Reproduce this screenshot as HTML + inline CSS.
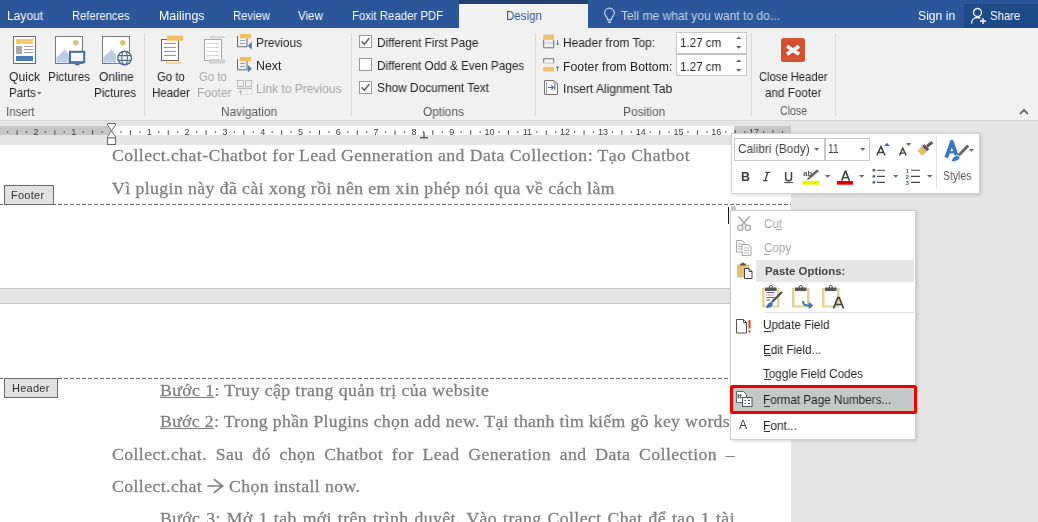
<!DOCTYPE html>
<html><head><meta charset="utf-8"><style>
html,body{-webkit-font-smoothing:antialiased;margin:0;padding:0;width:1038px;height:522px;overflow:hidden;background:#e6e6e6;}
.r{position:absolute;box-sizing:border-box;}
.t{position:absolute;line-height:0;white-space:pre;will-change:transform;}
svg.r{overflow:visible;will-change:transform;}
</style></head><body>
<div class="r" style="left:0px;top:0px;width:1038px;height:28px;background:#2b579a;"></div>
<div class="t" style="left:7.4px;top:16.07px;font-size:12.2px;color:#ffffff;font-family:'Liberation Sans', sans-serif;transform:scaleX(0.9861);transform-origin:0 0;">Layout</div>
<div class="t" style="left:72.4px;top:16.07px;font-size:12.2px;color:#ffffff;font-family:'Liberation Sans', sans-serif;transform:scaleX(0.9230);transform-origin:0 0;">References</div>
<div class="t" style="left:158.6px;top:16.07px;font-size:12.2px;color:#ffffff;font-family:'Liberation Sans', sans-serif;transform:scaleX(1.0186);transform-origin:0 0;">Mailings</div>
<div class="t" style="left:232.6px;top:16.07px;font-size:12.2px;color:#ffffff;font-family:'Liberation Sans', sans-serif;transform:scaleX(0.9256);transform-origin:0 0;">Review</div>
<div class="t" style="left:298px;top:16.07px;font-size:12.2px;color:#ffffff;font-family:'Liberation Sans', sans-serif;transform:scaleX(0.9462);transform-origin:0 0;">View</div>
<div class="t" style="left:352px;top:16.07px;font-size:12.2px;color:#ffffff;font-family:'Liberation Sans', sans-serif;transform:scaleX(0.9344);transform-origin:0 0;">Foxit Reader PDF</div>
<div class="r" style="left:458.7px;top:0px;width:129.6px;height:4px;background:#213f70;"></div>
<div class="r" style="left:458.7px;top:4px;width:129.6px;height:24px;background:#f1f1f1;"></div>
<div class="t" style="left:505.5px;top:15.87px;font-size:12.2px;color:#2b579a;font-family:'Liberation Sans', sans-serif;transform:scaleX(0.9459);transform-origin:0 0;">Design</div>
<svg class="r" style="left:603px;top:7px;" width="13" height="16" viewBox="0 0 13 16"><path d="M6.5 1.2C3.6 1.2 1.6 3.3 1.6 5.9c0 1.8 1 3 1.9 4 .6.7.9 1.3.9 2v.6h4.2v-.6c0-.7.3-1.3.9-2 .9-1 1.9-2.2 1.9-4 0-2.6-2-4.7-4.9-4.7z" fill="none" stroke="#c9d6ea" stroke-width="1.2"/><path d="M4.5 14h4M5 15.5h3" stroke="#c9d6ea" stroke-width="1"/></svg>
<div class="t" style="left:620.8px;top:16.07px;font-size:12.2px;color:#c9d6ea;font-family:'Liberation Sans', sans-serif;transform:scaleX(0.9900);transform-origin:0 0;">Tell me what you want to do...</div>
<div class="t" style="left:917.7px;top:16.07px;font-size:12.2px;color:#ffffff;font-family:'Liberation Sans', sans-serif;transform:scaleX(0.9944);transform-origin:0 0;">Sign in</div>
<div class="r" style="left:964px;top:4px;width:74px;height:24px;background:#1e4a88;"></div>
<svg class="r" style="left:970px;top:7px;" width="18" height="18" viewBox="0 0 18 18"><circle cx="7.5" cy="5.5" r="4" fill="none" stroke="#fff" stroke-width="1.3"/><path d="M1.5 16.5c0-3.5 2.5-6 6-6 1.2 0 2.2.3 3 .8" fill="none" stroke="#fff" stroke-width="1.3"/><path d="M13 11v6M10 14h6" stroke="#fff" stroke-width="1.3"/></svg>
<div class="t" style="left:990px;top:16.07px;font-size:12.2px;color:#ffffff;font-family:'Liberation Sans', sans-serif;transform:scaleX(0.9290);transform-origin:0 0;">Share</div>
<div class="r" style="left:0px;top:28px;width:1038px;height:92px;background:#f1f1f1;"></div>
<div class="r" style="left:0px;top:120px;width:1038px;height:1px;background:#d6d6d6;"></div>
<div class="r" style="left:144px;top:33px;width:1px;height:83px;background:#d9d9d9;"></div>
<div class="r" style="left:351px;top:33px;width:1px;height:83px;background:#d9d9d9;"></div>
<div class="r" style="left:535px;top:33px;width:1px;height:83px;background:#d9d9d9;"></div>
<div class="r" style="left:751px;top:33px;width:1px;height:83px;background:#d9d9d9;"></div>
<div class="r" style="left:835px;top:33px;width:1px;height:83px;background:#d9d9d9;"></div>
<svg class="r" style="left:13px;top:36px;" width="23" height="28" viewBox="0 0 23 28"><rect x="0.5" y="0.5" width="22" height="27" fill="#fff" stroke="#6d6d6d"/><rect x="3" y="3" width="17" height="5" fill="#f0c86e"/><rect x="3" y="10" width="6" height="8" fill="#a9a9a9"/><path d="M11 10.5h9M11 13.5h9M11 16.5h9" stroke="#9a9a9a"/><rect x="3" y="20" width="17" height="5" fill="#4a7ebb"/></svg>
<svg class="r" style="left:55px;top:36px;" width="32" height="32" viewBox="0 0 32 32"><rect x="0.5" y="0.5" width="27" height="27" fill="#fff" stroke="#7a7a7a"/><circle cx="20.8" cy="6.8" r="2.7" fill="#e9b876"/><path d="M1.5 26.5V21.5L9.5 13.5 14 18V26.5z" fill="#bccde6"/><rect x="15" y="15.8" width="14.2" height="10.4" fill="#f4f9ff" stroke="#4d6a96" stroke-width="2"/><path d="M20 28.6h4.5" stroke="#4d6a96" stroke-width="1.2"/></svg>
<svg class="r" style="left:102px;top:36px;" width="32" height="32" viewBox="0 0 32 32"><rect x="0.5" y="0.5" width="27" height="27" fill="#fff" stroke="#7a7a7a"/><circle cx="20.8" cy="6.8" r="2.7" fill="#e0c26c"/><path d="M1.5 26.5V21.5L9.5 13.5 14 18V26.5z" fill="#bccde6"/><circle cx="22.6" cy="22" r="6.8" fill="#fff" stroke="#4d6a96" stroke-width="1.4"/><ellipse cx="22.6" cy="22" rx="2.8" ry="6.8" fill="none" stroke="#4d6a96" stroke-width="1.1"/><path d="M15.8 19.6h13.6M15.8 24.4h13.6" stroke="#4d6a96" stroke-width="1.1"/></svg>
<div class="t" style="left:-4.2px;top:77.07px;font-size:12.2px;color:#262626;font-family:'Liberation Sans', sans-serif;transform:scaleX(0.9590);transform-origin:0 0;">t</div>
<div class="t" style="left:9px;top:77.07px;font-size:12.2px;color:#262626;font-family:'Liberation Sans', sans-serif;transform:scaleX(1.0000);transform-origin:0 0;">Quick</div>
<div class="t" style="left:8.6px;top:92.87px;font-size:12.2px;color:#262626;font-family:'Liberation Sans', sans-serif;transform:scaleX(0.9444);transform-origin:0 0;">Parts</div>
<svg class="r" style="left:37.4px;top:91.8px;" width="6" height="4" viewBox="0 0 6 4"><path d="M0 0h4.6l-2.3 2.4z" fill="#666"/></svg>
<div class="t" style="left:48.3px;top:77.07px;font-size:12.2px;color:#262626;font-family:'Liberation Sans', sans-serif;transform:scaleX(0.9535);transform-origin:0 0;">Pictures</div>
<div class="t" style="left:99px;top:77.07px;font-size:12.2px;color:#262626;font-family:'Liberation Sans', sans-serif;transform:scaleX(0.9829);transform-origin:0 0;">Online</div>
<div class="t" style="left:94px;top:92.87px;font-size:12.2px;color:#262626;font-family:'Liberation Sans', sans-serif;transform:scaleX(0.9535);transform-origin:0 0;">Pictures</div>
<div class="t" style="left:6.3px;top:111.57px;font-size:12.2px;color:#595959;font-family:'Liberation Sans', sans-serif;transform:scaleX(0.9400);transform-origin:0 0;">Insert</div>
<svg class="r" style="left:160px;top:35px;" width="26" height="30" viewBox="0 0 26 30"><rect x="1.5" y="4.5" width="17" height="21" fill="#fff" stroke="#666" stroke-width="1"/><path d="M4 8.4h12M4 12.4h12M4 16.4h12M4 20.4h12" stroke="#8c8ca0"/><rect x="6.8" y="0.7" width="16.4" height="5" fill="#f0c060"/><rect x="6" y="27.2" width="15.5" height="1.6" fill="#f3cf86"/></svg>
<svg class="r" style="left:203px;top:35px;" width="26" height="30" viewBox="0 0 26 30"><rect x="7" y="1" width="14.5" height="2" fill="#d6d6d6"/><rect x="1.5" y="4.5" width="17" height="21" fill="#fff" stroke="#a8a8a8" stroke-width="1.1"/><path d="M4 8.4h12M4 12.4h12M4 16.4h12M4 20.4h12" stroke="#cfcfcf"/><rect x="6" y="24" width="16" height="4.6" fill="#d3d3d3"/></svg>
<div class="t" style="left:156.6px;top:76.77px;font-size:12.2px;color:#262626;font-family:'Liberation Sans', sans-serif;transform:scaleX(0.9300);transform-origin:0 0;">Go to</div>
<div class="t" style="left:151.7px;top:92.97px;font-size:12.2px;color:#262626;font-family:'Liberation Sans', sans-serif;transform:scaleX(0.9462);transform-origin:0 0;">Header</div>
<div class="t" style="left:198.7px;top:76.77px;font-size:12.2px;color:#a6a6a6;font-family:'Liberation Sans', sans-serif;transform:scaleX(0.9300);transform-origin:0 0;">Go to</div>
<div class="t" style="left:196.7px;top:92.97px;font-size:12.2px;color:#a6a6a6;font-family:'Liberation Sans', sans-serif;transform:scaleX(0.9794);transform-origin:0 0;">Footer</div>
<svg class="r" style="left:237px;top:34px;" width="16" height="17" viewBox="0 0 16 17"><path d="M0.5 2v10.8h9.5V4" fill="none" stroke="#6a6a6a"/><path d="M3 6.5h5M3 9.5h5" stroke="#8fa3c4"/><rect x="2.8" y="0" width="11.2" height="4.3" fill="#f0c060"/><path d="M10.8 11.8L14.8 7.8v7.6z" fill="#4a7ebb"/></svg>
<svg class="r" style="left:237px;top:57px;" width="16" height="17" viewBox="0 0 16 17"><path d="M0.5 2v10.8h9.5V4" fill="none" stroke="#6a6a6a"/><path d="M3 6.5h5M3 9.5h5" stroke="#8fa3c4"/><rect x="2.8" y="0" width="11.2" height="4.3" fill="#f0c060"/><path d="M14.8 11.8L10.8 7.8v7.6z" fill="#4a7ebb"/></svg>
<svg class="r" style="left:237px;top:80px;" width="16" height="16" viewBox="0 0 16 16"><rect x="0.5" y="0.5" width="6" height="6" fill="none" stroke="#bdbdbd"/><rect x="8.5" y="0.5" width="6" height="6" fill="none" stroke="#bdbdbd"/><path d="M0 8.5h15" stroke="#bdbdbd" stroke-width="1.5"/><path d="M3.5 15V10.5M1.5 12.5l2-2 2 2" fill="none" stroke="#b5b5b5"/><path d="M6 14.5h9M14.5 10v5" stroke="#c8c8c8" stroke-dasharray="1 1.2"/></svg>
<div class="t" style="left:256.4px;top:42.97px;font-size:12.2px;color:#262626;font-family:'Liberation Sans', sans-serif;transform:scaleX(0.9696);transform-origin:0 0;">Previous</div>
<div class="t" style="left:256.4px;top:65.97px;font-size:12.2px;color:#262626;font-family:'Liberation Sans', sans-serif;transform:scaleX(1.0125);transform-origin:0 0;">Next</div>
<div class="t" style="left:256.4px;top:88.87px;font-size:12.2px;color:#a6a6a6;font-family:'Liberation Sans', sans-serif;transform:scaleX(0.9882);transform-origin:0 0;">Link to Previous</div>
<div class="t" style="left:220.6px;top:111.77px;font-size:12.2px;color:#595959;font-family:'Liberation Sans', sans-serif;transform:scaleX(0.9750);transform-origin:0 0;">Navigation</div>
<svg class="r" style="left:359px;top:35px;" width="13" height="13" viewBox="0 0 13 13"><rect x="0.5" y="0.5" width="12" height="12" fill="#fff" stroke="#999"/><path d="M2.6 6.4l2.8 2.9 5-6.2" fill="none" stroke="#666" stroke-width="1.6"/></svg>
<svg class="r" style="left:359px;top:58px;" width="13" height="13" viewBox="0 0 13 13"><rect x="0.5" y="0.5" width="12" height="12" fill="#fff" stroke="#999"/></svg>
<svg class="r" style="left:359px;top:81px;" width="13" height="13" viewBox="0 0 13 13"><rect x="0.5" y="0.5" width="12" height="12" fill="#fff" stroke="#999"/><path d="M2.6 6.4l2.8 2.9 5-6.2" fill="none" stroke="#666" stroke-width="1.6"/></svg>
<div class="t" style="left:377.4px;top:42.67px;font-size:12.2px;color:#262626;font-family:'Liberation Sans', sans-serif;transform:scaleX(0.9670);transform-origin:0 0;">Different First Page</div>
<div class="t" style="left:377.4px;top:65.77px;font-size:12.2px;color:#262626;font-family:'Liberation Sans', sans-serif;transform:scaleX(0.9632);transform-origin:0 0;">Different Odd &amp; Even Pages</div>
<div class="t" style="left:377.4px;top:88.47px;font-size:12.2px;color:#262626;font-family:'Liberation Sans', sans-serif;transform:scaleX(0.9746);transform-origin:0 0;">Show Document Text</div>
<div class="t" style="left:422.6px;top:111.67px;font-size:12.2px;color:#595959;font-family:'Liberation Sans', sans-serif;transform:scaleX(0.9738);transform-origin:0 0;">Options</div>
<svg class="r" style="left:542px;top:34px;" width="18" height="15" viewBox="0 0 18 15"><rect x="1.2" y="0.6" width="10.7" height="5.2" fill="#f0c070"/><path d="M1.5 9h10.5" stroke="#a0a0a0" stroke-dasharray="1 1"/><path d="M1.7 5.8v8h10v-8" fill="none" stroke="#707070" stroke-width="1"/><path d="M15.5 6.2v4.8M14 9.4l1.5 1.6 1.5-1.6" fill="none" stroke="#4d6a96" stroke-width="0.9"/></svg>
<svg class="r" style="left:542px;top:58px;" width="18" height="15" viewBox="0 0 18 15"><path d="M1.7 4.5V0.7h10v3.8" fill="none" stroke="#707070" stroke-width="1"/><path d="M1.5 5.2h10.5" stroke="#a0a0a0" stroke-dasharray="1 1"/><rect x="1.2" y="8.8" width="10.7" height="4.8" fill="#f0c070"/><path d="M15.5 13.2v-4.8M14 10l1.5-1.6 1.5 1.6" fill="none" stroke="#4d6a96" stroke-width="0.9"/></svg>
<svg class="r" style="left:543px;top:80px;" width="16" height="16" viewBox="0 0 16 16"><path d="M1.5 0.5h9.5l3.5 3.5v10.5H1.5z" fill="#fff" stroke="#707070"/><path d="M3.5 2v12" stroke="#a0a0a0"/><path d="M11 0.5v3.5h3.5" fill="none" stroke="#909090"/><path d="M5 7.5h5.5M8.3 5.3l2.2 2.2-2.2 2.2M11.8 4.8v5.4" fill="none" stroke="#4d6a96" stroke-width="1.1"/></svg>
<div class="t" style="left:562.8px;top:43.27px;font-size:12.2px;color:#262626;font-family:'Liberation Sans', sans-serif;transform:scaleX(0.9804);transform-origin:0 0;">Header from Top:</div>
<div class="t" style="left:562.8px;top:66.57px;font-size:12.2px;color:#262626;font-family:'Liberation Sans', sans-serif;transform:scaleX(1.0093);transform-origin:0 0;">Footer from Bottom:</div>
<div class="t" style="left:562.8px;top:88.67px;font-size:12.2px;color:#262626;font-family:'Liberation Sans', sans-serif;transform:scaleX(0.9908);transform-origin:0 0;">Insert Alignment Tab</div>
<div class="t" style="left:622.7px;top:111.57px;font-size:12.2px;color:#595959;font-family:'Liberation Sans', sans-serif;transform:scaleX(0.9762);transform-origin:0 0;">Position</div>
<div class="r" style="left:676px;top:31.5px;width:70.8px;height:22.5px;background:#fff;border:1px solid #c9c9c9;"></div>
<div class="r" style="left:676px;top:53px;width:70.8px;height:23.3px;background:#fff;border:1px solid #c9c9c9;border-top:2px solid #c2c2c2;"></div>
<div class="t" style="left:679.7px;top:43.27px;font-size:12.2px;color:#262626;font-family:'Liberation Sans', sans-serif;transform:scaleX(0.9500);transform-origin:0 0;">1.27 cm</div>
<div class="t" style="left:679.7px;top:66.57px;font-size:12.2px;color:#262626;font-family:'Liberation Sans', sans-serif;transform:scaleX(0.9500);transform-origin:0 0;">1.27 cm</div>
<svg class="r" style="left:735.6px;top:36px;" width="6" height="13" viewBox="0 0 6 13"><path d="M0 3.1L2.75 0.4 5.5 3.1zM0 10H5.5L2.75 12.7z" fill="#666"/></svg>
<svg class="r" style="left:735.6px;top:58.8px;" width="6" height="13" viewBox="0 0 6 13"><path d="M0 3.1L2.75 0.4 5.5 3.1zM0 10H5.5L2.75 12.7z" fill="#666"/></svg>
<svg class="r" style="left:781px;top:38px;" width="24" height="24" viewBox="0 0 24 24"><rect x="0" y="0" width="24" height="24" rx="2.5" fill="#d5502f"/><path d="M6 8.2l12 8.1M18 8.2l-12 8.1" stroke="#fff" stroke-width="3.6"/></svg>
<div class="t" style="left:758.6px;top:76.67px;font-size:12.2px;color:#262626;font-family:'Liberation Sans', sans-serif;transform:scaleX(0.9200);transform-origin:0 0;">Close Header</div>
<div class="t" style="left:765.3px;top:92.77px;font-size:12.2px;color:#262626;font-family:'Liberation Sans', sans-serif;transform:scaleX(0.9576);transform-origin:0 0;">and Footer</div>
<div class="t" style="left:779.7px;top:111.47px;font-size:12.2px;color:#595959;font-family:'Liberation Sans', sans-serif;transform:scaleX(0.8645);transform-origin:0 0;">Close</div>
<svg class="r" style="left:1019px;top:109px;" width="10" height="6" viewBox="0 0 10 6"><path d="M1 5l4-4 4 4" fill="none" stroke="#555" stroke-width="1.6"/></svg>
<div class="r" style="left:0px;top:121px;width:1038px;height:24px;background:#e6e6e6;"></div>
<div class="r" style="left:0px;top:126px;width:111.5px;height:9.3px;background:#c6c6c6;"></div>
<div class="r" style="left:111.5px;top:126px;width:622px;height:9.3px;background:#ffffff;"></div>
<div class="r" style="left:733.5px;top:126px;width:57px;height:9.3px;background:#c6c6c6;"></div>
<svg class="r" style="left:0;top:0" width="1038" height="150" viewBox="0 0 1038 150"><text x="-1.90" y="134.8" font-size="9" text-anchor="middle" fill="#3a3a3a" font-family="Liberation Sans">3</text><rect x="6.95" y="131.3" width="1.3" height="1.5" fill="#555"/><rect x="16.50" y="130.2" width="1.1" height="4.6" fill="#555"/><rect x="25.85" y="131.3" width="1.3" height="1.5" fill="#555"/><text x="35.90" y="134.8" font-size="9" text-anchor="middle" fill="#3a3a3a" font-family="Liberation Sans">2</text><rect x="44.75" y="131.3" width="1.3" height="1.5" fill="#555"/><rect x="54.30" y="130.2" width="1.1" height="4.6" fill="#555"/><rect x="63.65" y="131.3" width="1.3" height="1.5" fill="#555"/><text x="73.70" y="134.8" font-size="9" text-anchor="middle" fill="#3a3a3a" font-family="Liberation Sans">1</text><rect x="82.55" y="131.3" width="1.3" height="1.5" fill="#555"/><rect x="92.10" y="130.2" width="1.1" height="4.6" fill="#555"/><rect x="101.45" y="131.3" width="1.3" height="1.5" fill="#555"/><rect x="120.35" y="131.3" width="1.3" height="1.5" fill="#555"/><rect x="129.90" y="130.2" width="1.1" height="4.6" fill="#555"/><rect x="139.25" y="131.3" width="1.3" height="1.5" fill="#555"/><text x="149.30" y="134.8" font-size="9" text-anchor="middle" fill="#3a3a3a" font-family="Liberation Sans">1</text><rect x="158.15" y="131.3" width="1.3" height="1.5" fill="#555"/><rect x="167.70" y="130.2" width="1.1" height="4.6" fill="#555"/><rect x="177.05" y="131.3" width="1.3" height="1.5" fill="#555"/><text x="187.10" y="134.8" font-size="9" text-anchor="middle" fill="#3a3a3a" font-family="Liberation Sans">2</text><rect x="195.95" y="131.3" width="1.3" height="1.5" fill="#555"/><rect x="205.50" y="130.2" width="1.1" height="4.6" fill="#555"/><rect x="214.85" y="131.3" width="1.3" height="1.5" fill="#555"/><text x="224.90" y="134.8" font-size="9" text-anchor="middle" fill="#3a3a3a" font-family="Liberation Sans">3</text><rect x="233.75" y="131.3" width="1.3" height="1.5" fill="#555"/><rect x="243.30" y="130.2" width="1.1" height="4.6" fill="#555"/><rect x="252.65" y="131.3" width="1.3" height="1.5" fill="#555"/><text x="262.70" y="134.8" font-size="9" text-anchor="middle" fill="#3a3a3a" font-family="Liberation Sans">4</text><rect x="271.55" y="131.3" width="1.3" height="1.5" fill="#555"/><rect x="281.10" y="130.2" width="1.1" height="4.6" fill="#555"/><rect x="290.45" y="131.3" width="1.3" height="1.5" fill="#555"/><text x="300.50" y="134.8" font-size="9" text-anchor="middle" fill="#3a3a3a" font-family="Liberation Sans">5</text><rect x="309.35" y="131.3" width="1.3" height="1.5" fill="#555"/><rect x="318.90" y="130.2" width="1.1" height="4.6" fill="#555"/><rect x="328.25" y="131.3" width="1.3" height="1.5" fill="#555"/><text x="338.30" y="134.8" font-size="9" text-anchor="middle" fill="#3a3a3a" font-family="Liberation Sans">6</text><rect x="347.15" y="131.3" width="1.3" height="1.5" fill="#555"/><rect x="356.70" y="130.2" width="1.1" height="4.6" fill="#555"/><rect x="366.05" y="131.3" width="1.3" height="1.5" fill="#555"/><text x="376.10" y="134.8" font-size="9" text-anchor="middle" fill="#3a3a3a" font-family="Liberation Sans">7</text><rect x="384.95" y="131.3" width="1.3" height="1.5" fill="#555"/><rect x="394.50" y="130.2" width="1.1" height="4.6" fill="#555"/><rect x="403.85" y="131.3" width="1.3" height="1.5" fill="#555"/><text x="413.90" y="134.8" font-size="9" text-anchor="middle" fill="#3a3a3a" font-family="Liberation Sans">8</text><rect x="422.75" y="131.3" width="1.3" height="1.5" fill="#555"/><rect x="432.30" y="130.2" width="1.1" height="4.6" fill="#555"/><rect x="441.65" y="131.3" width="1.3" height="1.5" fill="#555"/><text x="451.70" y="134.8" font-size="9" text-anchor="middle" fill="#3a3a3a" font-family="Liberation Sans">9</text><rect x="460.55" y="131.3" width="1.3" height="1.5" fill="#555"/><rect x="470.10" y="130.2" width="1.1" height="4.6" fill="#555"/><rect x="479.45" y="131.3" width="1.3" height="1.5" fill="#555"/><text x="489.50" y="134.8" font-size="9" text-anchor="middle" fill="#3a3a3a" font-family="Liberation Sans">10</text><rect x="498.35" y="131.3" width="1.3" height="1.5" fill="#555"/><rect x="507.90" y="130.2" width="1.1" height="4.6" fill="#555"/><rect x="517.25" y="131.3" width="1.3" height="1.5" fill="#555"/><text x="527.30" y="134.8" font-size="9" text-anchor="middle" fill="#3a3a3a" font-family="Liberation Sans">11</text><rect x="536.15" y="131.3" width="1.3" height="1.5" fill="#555"/><rect x="545.70" y="130.2" width="1.1" height="4.6" fill="#555"/><rect x="555.05" y="131.3" width="1.3" height="1.5" fill="#555"/><text x="565.10" y="134.8" font-size="9" text-anchor="middle" fill="#3a3a3a" font-family="Liberation Sans">12</text><rect x="573.95" y="131.3" width="1.3" height="1.5" fill="#555"/><rect x="583.50" y="130.2" width="1.1" height="4.6" fill="#555"/><rect x="592.85" y="131.3" width="1.3" height="1.5" fill="#555"/><text x="602.90" y="134.8" font-size="9" text-anchor="middle" fill="#3a3a3a" font-family="Liberation Sans">13</text><rect x="611.75" y="131.3" width="1.3" height="1.5" fill="#555"/><rect x="621.30" y="130.2" width="1.1" height="4.6" fill="#555"/><rect x="630.65" y="131.3" width="1.3" height="1.5" fill="#555"/><text x="640.70" y="134.8" font-size="9" text-anchor="middle" fill="#3a3a3a" font-family="Liberation Sans">14</text><rect x="649.55" y="131.3" width="1.3" height="1.5" fill="#555"/><rect x="659.10" y="130.2" width="1.1" height="4.6" fill="#555"/><rect x="668.45" y="131.3" width="1.3" height="1.5" fill="#555"/><text x="678.50" y="134.8" font-size="9" text-anchor="middle" fill="#3a3a3a" font-family="Liberation Sans">15</text><rect x="687.35" y="131.3" width="1.3" height="1.5" fill="#555"/><rect x="696.90" y="130.2" width="1.1" height="4.6" fill="#555"/><rect x="706.25" y="131.3" width="1.3" height="1.5" fill="#555"/><text x="716.30" y="134.8" font-size="9" text-anchor="middle" fill="#3a3a3a" font-family="Liberation Sans">16</text><rect x="725.15" y="131.3" width="1.3" height="1.5" fill="#555"/><rect x="734.70" y="130.2" width="1.1" height="4.6" fill="#555"/><rect x="744.05" y="131.3" width="1.3" height="1.5" fill="#555"/><text x="754.10" y="134.8" font-size="9" text-anchor="middle" fill="#3a3a3a" font-family="Liberation Sans">17</text><rect x="762.95" y="131.3" width="1.3" height="1.5" fill="#555"/><rect x="772.50" y="130.2" width="1.1" height="4.6" fill="#555"/><rect x="781.85" y="131.3" width="1.3" height="1.5" fill="#555"/></svg>
<div class="r" style="left:0px;top:145px;width:791px;height:377px;background:#ffffff;"></div>
<div class="r" style="left:0px;top:288px;width:791px;height:16px;background:#e6e6e6;border-top:1px solid #c8c8c8;border-bottom:1px solid #c8c8c8;"></div>
<div class="r" style="left:791px;top:145px;width:247px;height:377px;background:#e6e6e6;"></div>
<svg class="r" style="left:106px;top:122px;" width="11" height="23" viewBox="0 0 11 23"><path d="M1.5 1.5h8v1.5L5.5 8.8 1.5 3z" fill="#fff" stroke="#6a6a6a"/><path d="M5.5 8.8l4 6v1.2h-8v-1.2z" fill="#fff" stroke="#6a6a6a"/><rect x="1.5" y="16" width="8" height="6.5" fill="#fff" stroke="#6a6a6a"/></svg>
<svg class="r" style="left:420px;top:132px;" width="9" height="7" viewBox="0 0 9 7"><path d="M4 0.5v5.5" stroke="#555" stroke-width="1.4"/><rect x="0" y="5" width="8" height="1.4" fill="#555"/></svg>
<div class="t" style="left:112.4px;top:154.73px;font-size:17.7px;color:#7f7f7f;font-family:'Liberation Serif', serif;letter-spacing:0.43px;-webkit-text-stroke:0.3px #7f7f7f;">Collect.chat-Chatbot for Lead Genneration and Data Collection: Tạo Chatbot</div>
<div class="t" style="left:112.4px;top:188.33px;font-size:17.7px;color:#7f7f7f;font-family:'Liberation Serif', serif;letter-spacing:0.43px;-webkit-text-stroke:0.3px #7f7f7f;">Vì plugin này đã cài xong rồi nên em xin phép nói qua về cách làm</div>
<div class="r" style="left:0px;top:204px;width:791px;height:1px;background:repeating-linear-gradient(90deg,#6a6a6a 0 4px,transparent 4px 6px);background-position:4px 0;"></div>
<div class="r" style="left:0px;top:378px;width:791px;height:1px;background:repeating-linear-gradient(90deg,#6a6a6a 0 4px,transparent 4px 6px);background-position:4px 0;"></div>
<div class="r" style="left:4px;top:185px;width:50px;height:20px;background:#e1e1e1;border:1px solid #6a6a6a;"></div>
<div class="r" style="left:54px;top:204px;width:2px;height:1px;background:#6a6a6a;"></div>
<div class="t" style="left:11.3px;top:194.79px;font-size:11px;color:#333;font-family:'Liberation Sans', sans-serif;letter-spacing:0.25px;">Footer</div>
<div class="r" style="left:4px;top:378px;width:54px;height:20px;background:#e1e1e1;border:1px solid #6a6a6a;"></div>
<div class="r" style="left:58px;top:378px;width:4px;height:1px;background:#6a6a6a;"></div>
<div class="t" style="left:12.3px;top:387.89px;font-size:11px;color:#333;font-family:'Liberation Sans', sans-serif;letter-spacing:0.25px;">Header</div>
<div class="t" style="left:160.1px;top:389.83px;font-size:17.7px;color:#7f7f7f;font-family:'Liberation Serif', serif;letter-spacing:0.43px;-webkit-text-stroke:0.3px #7f7f7f;"><u>Bước 1</u>: Truy cập trang quản trị của website</div>
<div class="t" style="left:160.1px;top:421.43px;font-size:17.7px;color:#7f7f7f;font-family:'Liberation Serif', serif;letter-spacing:0.33px;width:570px;text-align:left;text-align:justify;text-align-last:justify;white-space:normal;-webkit-text-stroke:0.3px #7f7f7f;"><u>Bước 2</u>: Trong phần Plugins chọn add new. Tại thanh tìm kiếm gõ key words</div>
<div class="t" style="left:112.4px;top:453.63px;font-size:17.7px;color:#7f7f7f;font-family:'Liberation Serif', serif;letter-spacing:0.43px;width:623px;text-align:left;text-align:justify;text-align-last:justify;white-space:normal;-webkit-text-stroke:0.3px #7f7f7f;">Collect.chat. Sau đó chọn Chatbot for Lead Generation and Data Collection –</div>
<div class="t" style="left:112.4px;top:486.33px;font-size:17.7px;color:#7f7f7f;font-family:'Liberation Serif', serif;letter-spacing:0.43px;-webkit-text-stroke:0.3px #7f7f7f;">Collect.chat</div>
<div class="t" style="left:229.3px;top:486.33px;font-size:17.7px;color:#7f7f7f;font-family:'Liberation Serif', serif;letter-spacing:0.43px;-webkit-text-stroke:0.3px #7f7f7f;">Chọn install now.</div>
<svg class="r" style="left:205px;top:476.8px;" width="20" height="18" viewBox="0 0 20 18"><path d="M2.4 9h15.4M8.8 2.2l8.8 6.8-8.8 6.8" fill="none" stroke="#7f7f7f" stroke-width="1.7"/></svg>
<div class="t" style="left:160.1px;top:518.33px;font-size:17.7px;color:#7f7f7f;font-family:'Liberation Serif', serif;letter-spacing:0.43px;width:575px;text-align:left;text-align:justify;text-align-last:justify;white-space:normal;-webkit-text-stroke:0.3px #7f7f7f;">Bước 3: Mở 1 tab mới trên trình duyệt. Vào trang Collect Chat để tạo 1 tài</div>
<div class="r" style="left:730.5px;top:132.5px;width:249px;height:61.5px;background:#fff;border:1px solid #d0d0d0;box-shadow:1px 1px 4px rgba(0,0,0,0.16);"></div>
<div class="r" style="left:734px;top:138.4px;width:90.5px;height:23px;background:#fff;border:1px solid #c6c6c6;"></div>
<div class="r" style="left:823.5px;top:138.4px;width:46px;height:23px;background:#fff;border:1px solid #c6c6c6;border-left:2px solid #c6c6c6;"></div>
<div class="t" style="left:737.6px;top:149.37px;font-size:12.2px;color:#404040;font-family:'Liberation Sans', sans-serif;transform:scaleX(0.9712);transform-origin:0 0;">Calibri (Body)</div>
<div class="t" style="left:828.4px;top:149.37px;font-size:12.2px;color:#404040;font-family:'Liberation Sans', sans-serif;transform:scaleX(0.8455);transform-origin:0 0;">11</div>
<svg class="r" style="left:814.2px;top:148.2px;" width="6" height="3" viewBox="0 0 6 3"><path d="M0 0h5.4l-2.7 2.7z" fill="#666"/></svg>
<svg class="r" style="left:859.8px;top:148.2px;" width="6" height="3" viewBox="0 0 6 3"><path d="M0 0h5.4l-2.7 2.7z" fill="#666"/></svg>
<svg class="r" style="left:874px;top:141px;" width="17" height="16" viewBox="0 0 17 16"><path d="M2.8 14.5L6.95 5.6 11.1 14.5M4.3 11.6h5.3" fill="none" stroke="#404040" stroke-width="1.5"/><path d="M10 4.9L12.95 1.8 15.9 4.9z" fill="#4d6a96"/></svg>
<svg class="r" style="left:897px;top:141px;" width="17" height="16" viewBox="0 0 17 16"><path d="M2.4 14.5L5.8 7.1 9.2 14.5M3.6 12.1h4.4" fill="none" stroke="#404040" stroke-width="1.4"/><path d="M9 2.1H14.3L11.65 4.9z" fill="#4d6a96"/></svg>
<svg class="r" style="left:916px;top:141px;" width="19" height="17" viewBox="0 0 19 17"><path d="M1.5 9.8L6 5.3 11 10.3 6.5 14.8z" fill="#e5bd66"/><path d="M6 5.3L8.3 3 13.3 8 11 10.3z" fill="#5a5a5a"/><path d="M11 5.2L16.3 1.3" stroke="#5a5a5a" stroke-width="3"/></svg>
<div class="r" style="left:936px;top:136px;width:1px;height:52px;background:#e1e1e1;"></div>
<svg class="r" style="left:943px;top:138px;" width="34" height="26" viewBox="0 0 34 26"><path d="M3.3 19.6L8.85 3.8 14.4 19.6" fill="none" stroke="#3b78c1" stroke-width="3.8" stroke-linejoin="round"/><path d="M5.6 14.3h6.6" stroke="#3b78c1" stroke-width="2.4"/><path d="M8 23.8C9 20 11 17.5 14.5 17.5 17 17.5 17.6 19.8 16.2 21.3 14.2 23.3 11 23.8 8 23.8z" fill="#3b78c1" stroke="#fff" stroke-width="0.9"/><path d="M15.8 17.2L25.2 7.5" stroke="#666" stroke-width="3"/><path d="M26 11.1H30.8L28.4 13.8z" fill="#666"/></svg>
<div class="t" style="left:942.7px;top:175.77px;font-size:12.2px;color:#595959;font-family:'Liberation Sans', sans-serif;transform:scaleX(0.8594);transform-origin:0 0;">Styles</div>
<div class="t" style="left:740.6px;top:176.50px;font-size:12.4px;color:#404040;font-family:'Liberation Sans', sans-serif;font-weight:700;">B</div>
<svg class="r" style="left:762px;top:171px;" width="9" height="11" viewBox="0 0 9 11"><path d="M3.4 1.3H8M5.7 1.3L3.2 9.6M1 9.6H5.5" fill="none" stroke="#404040" stroke-width="1.3"/></svg>
<svg class="r" style="left:784px;top:171px;" width="10" height="13" viewBox="0 0 10 13"><path d="M1.7 1V6.8C1.7 8.8 2.8 9.9 4.6 9.9 6.4 9.9 7.5 8.8 7.5 6.8V1" fill="none" stroke="#404040" stroke-width="1.5"/><rect x="0.3" y="11.1" width="8.7" height="1" fill="#404040"/></svg>
<svg class="r" style="left:802px;top:168px;" width="20" height="18" viewBox="0 0 20 18"><text x="1.2" y="7.8" font-family="Liberation Sans" font-weight="700" font-size="7.6" fill="#555">ab</text><path d="M7.5 9.5l8.5-7.3" stroke="#666" stroke-width="2.5"/><path d="M5.5 11.5l2-1.8" stroke="#333" stroke-width="1.3"/><rect x="0.4" y="12.8" width="17" height="3.9" fill="#f0f000"/></svg>
<svg class="r" style="left:825.2px;top:175.1px;" width="6" height="3" viewBox="0 0 6 3"><path d="M0 0h5.4l-2.7 2.7z" fill="#666"/></svg>
<svg class="r" style="left:836px;top:168px;" width="20" height="18" viewBox="0 0 20 18"><path d="M5.6 12.8L9.2 3.4h0.6l3.6 9.4" fill="none" stroke="#404040" stroke-width="1.6"/><path d="M7 9.6h5" stroke="#404040" stroke-width="1.3"/><rect x="1" y="13" width="16.1" height="3.7" fill="#e30000"/></svg>
<svg class="r" style="left:859px;top:175.1px;" width="6" height="3" viewBox="0 0 6 3"><path d="M0 0h5.4l-2.7 2.7z" fill="#666"/></svg>
<svg class="r" style="left:871px;top:167px;" width="16" height="17" viewBox="0 0 16 17"><circle cx="2.9" cy="3.2" r="1.45" fill="#4d6a96"/><circle cx="2.9" cy="9.4" r="1.45" fill="#4d6a96"/><circle cx="2.9" cy="15.4" r="1.45" fill="#4d6a96"/><path d="M6 3.2h8M6 9.4h8M6 15.4h8" stroke="#4a4a4a" stroke-width="1.1"/></svg>
<svg class="r" style="left:893px;top:175.1px;" width="6" height="3" viewBox="0 0 6 3"><path d="M0 0h5.4l-2.7 2.7z" fill="#666"/></svg>
<svg class="r" style="left:904px;top:166px;" width="17" height="19" viewBox="0 0 17 19"><text x="1.8" y="6.6" font-family="Liberation Sans" font-size="5.6" font-weight="700" fill="#3d5a86">1</text><text x="1.8" y="12.8" font-family="Liberation Sans" font-size="5.6" font-weight="700" fill="#3d5a86">2</text><text x="1.8" y="18.8" font-family="Liberation Sans" font-size="5.6" font-weight="700" fill="#3d5a86">3</text><path d="M7 4.2h9M7 10.4h9M7 16.4h9" stroke="#4a4a4a" stroke-width="1.1"/></svg>
<svg class="r" style="left:927.1px;top:175.1px;" width="6" height="3" viewBox="0 0 6 3"><path d="M0 0h5.4l-2.7 2.7z" fill="#666"/></svg>
<div class="r" style="left:728px;top:206.5px;width:1.2px;height:17.2px;background:#1a1a1a;"></div>
<div class="r" style="left:730.5px;top:206px;width:5px;height:4.5px;background:#c8c8c8;border-radius:1.5px;"></div>
<div class="r" style="left:730.4px;top:210px;width:185.5px;height:229.5px;background:#fff;border:1px solid #cfcfcf;box-shadow:1px 1px 4px rgba(0,0,0,0.16);"></div>
<div class="r" style="left:756px;top:260px;width:157.6px;height:21.7px;background:#e6e6e6;"></div>
<svg class="r" style="left:736px;top:215px;" width="16" height="17" viewBox="0 0 16 17"><circle cx="4.3" cy="12.8" r="2.6" fill="none" stroke="#a6a6a6" stroke-width="1.3"/><circle cx="11.8" cy="12.8" r="2.6" fill="none" stroke="#a6a6a6" stroke-width="1.3"/><path d="M2.5 1.5l7.8 9M13.5 1.5l-7.8 9" stroke="#a6a6a6" stroke-width="1.4"/></svg>
<div class="t" style="left:763.8px;top:224.17px;font-size:12.2px;color:#a6a6a6;font-family:'Liberation Sans', sans-serif;transform:scaleX(0.9579);transform-origin:0 0;">Cut</div>
<div class="t" style="left:763.8px;top:248.47px;font-size:12.2px;color:#a6a6a6;font-family:'Liberation Sans', sans-serif;transform:scaleX(0.9607);transform-origin:0 0;">Copy</div>
<div class="r" style="left:763.8px;top:253.5px;width:6.5px;height:1px;background:#a6a6a6;"></div>
<div class="r" style="left:775.5px;top:229px;width:6px;height:1px;background:#a6a6a6;"></div>
<svg class="r" style="left:736px;top:240px;" width="16" height="16" viewBox="0 0 16 16"><path d="M0.5 0.5h5.5l2 2v9.5H0.5z" fill="#fff" stroke="#a6a6a6"/><path d="M2 4h4M2 6.5h4M2 9h4" stroke="#b5b5b5"/><path d="M6 4.5h6.5l2.5 2.5v8.5H6z" fill="#fff" stroke="#a6a6a6"/><path d="M8 8h5M8 10.5h5M8 13h5" stroke="#b5b5b5"/></svg>
<svg class="r" style="left:736px;top:261px;" width="17" height="18" viewBox="0 0 17 18"><path d="M1 3.5h12V16.5H1z" fill="#e3bf78"/><path d="M4.2 4.5V2.6h1.6a1.2 1.2 0 0 1 2.4 0h1.6v1.9z" fill="#555"/><path d="M8.5 7.5h4.5l3 3v7H8.5z" fill="#fff" stroke="#444"/><path d="M13 7.5v3h3" fill="none" stroke="#444"/></svg>
<div class="t" style="left:765.4px;top:271.05px;font-size:11.4px;color:#444444;font-family:'Liberation Sans', sans-serif;font-weight:700;">Paste Options:</div>
<svg class="r" style="left:761px;top:285px;" width="24" height="25" viewBox="0 0 24 25"><path d="M1 3h17.5v19.5H1z" fill="#e9cf9a"/><rect x="3.5" y="4.5" width="12.5" height="16" fill="#fff"/><path d="M4 2.5h11.5v3.5H4z" fill="#555"/><circle cx="9.8" cy="2" r="1.6" fill="none" stroke="#555" stroke-width="1"/><path d="M5.5 7.5h8M5.5 12.5h8M5.5 15h4" stroke="#4d6a96" stroke-width="1"/><path d="M5.5 10h8" stroke="#d04040" stroke-width="1.2" stroke-dasharray="1 0.6"/><path d="M11 17l10-10" stroke="#555" stroke-width="2.4"/><path d="M5 23c1-4 3-6 6-6 1 1 1 3 0 4-2 1.5-4 2-6 2z" fill="#3b6fb5"/></svg>
<svg class="r" style="left:791px;top:285px;" width="24" height="25" viewBox="0 0 24 25"><path d="M1 3h17.5v19.5H1z" fill="#e9cf9a"/><rect x="3.5" y="4.5" width="12.5" height="16" fill="#fff"/><path d="M4 2.5h11.5v3.5H4z" fill="#555"/><circle cx="9.8" cy="2" r="1.6" fill="none" stroke="#555" stroke-width="1"/><path d="M12 16c0 3 2 4.5 5 4.5h3.5M18 18l2.8 2.5-2.8 2.5" fill="none" stroke="#3b78c1" stroke-width="2"/></svg>
<svg class="r" style="left:821px;top:285px;" width="24" height="25" viewBox="0 0 24 25"><path d="M1 3h17.5v19.5H1z" fill="#e9cf9a"/><rect x="3.5" y="4.5" width="12.5" height="16" fill="#fff"/><path d="M4 2.5h11.5v3.5H4z" fill="#555"/><circle cx="9.8" cy="2" r="1.6" fill="none" stroke="#555" stroke-width="1"/><path d="M12.5 23.5L16.8 12.5h1.4l4.3 11M14 19.5h7" fill="none" stroke="#404040" stroke-width="1.7"/></svg>
<div class="r" style="left:764.5px;top:312px;width:149px;height:1px;background:#e1e1e1;"></div>
<svg class="r" style="left:736px;top:319px;" width="17" height="15" viewBox="0 0 17 15"><path d="M0.5 0.5h7l3 3v10.5h-10z" fill="#fff" stroke="#555"/><path d="M7.5 0.5v3h3" fill="none" stroke="#555"/><path d="M13.5 1v8.5" stroke="#d5502f" stroke-width="2.2"/><rect x="12.4" y="11.3" width="2.2" height="2.2" fill="#d5502f"/></svg>
<div class="t" style="left:763.4px;top:325.47px;font-size:12.2px;color:#262626;font-family:'Liberation Sans', sans-serif;transform:scaleX(0.9642);transform-origin:0 0;">Update Field</div>
<div class="t" style="left:763.4px;top:349.57px;font-size:12.2px;color:#262626;font-family:'Liberation Sans', sans-serif;transform:scaleX(0.9559);transform-origin:0 0;">Edit Field...</div>
<div class="t" style="left:763.4px;top:373.87px;font-size:12.2px;color:#262626;font-family:'Liberation Sans', sans-serif;transform:scaleX(0.9577);transform-origin:0 0;">Toggle Field Codes</div>
<div class="r" style="left:763.6px;top:330.6px;width:7.5px;height:1px;background:#333;"></div>
<div class="r" style="left:763.6px;top:354.7px;width:7.2px;height:1px;background:#333;"></div>
<div class="r" style="left:763.6px;top:379px;width:7px;height:1px;background:#333;"></div>
<div class="r" style="left:730.3px;top:385.3px;width:186.6px;height:29.2px;background:#c6c8c8;border:3.3px solid #ec0000;border-radius:2.5px;"></div>
<svg class="r" style="left:736px;top:391px;" width="17" height="17" viewBox="0 0 17 17"><path d="M0.5 0.5h7l3 3v8h-10z" fill="#fff" stroke="#666"/><path d="M2.5 3v4.5M4.5 3v4.5M1.3 4.3h4.5M1.3 6.3h4.5" stroke="#555" stroke-width="0.8"/><rect x="6.5" y="6.5" width="9.5" height="9" fill="#fff" stroke="#555"/><path d="M8.5 9.5h1.5M12 9.5h2M8.5 12.5h1.5M12 12.5h2" stroke="#555"/></svg>
<div class="t" style="left:763.4px;top:400.47px;font-size:12.2px;color:#262626;font-family:'Liberation Sans', sans-serif;transform:scaleX(0.9606);transform-origin:0 0;">Format Page Numbers...</div>
<div class="r" style="left:763.6px;top:405.6px;width:6.5px;height:1px;background:#333;"></div>
<div class="t" style="left:739.4px;top:425.27px;font-size:12.2px;color:#404040;font-family:'Liberation Sans', sans-serif;">A</div>
<div class="t" style="left:763.4px;top:425.57px;font-size:12.2px;color:#262626;font-family:'Liberation Sans', sans-serif;transform:scaleX(0.9788);transform-origin:0 0;">Font...</div>
<div class="r" style="left:763.6px;top:430.7px;width:6.5px;height:1px;background:#333;"></div>
</body></html>
